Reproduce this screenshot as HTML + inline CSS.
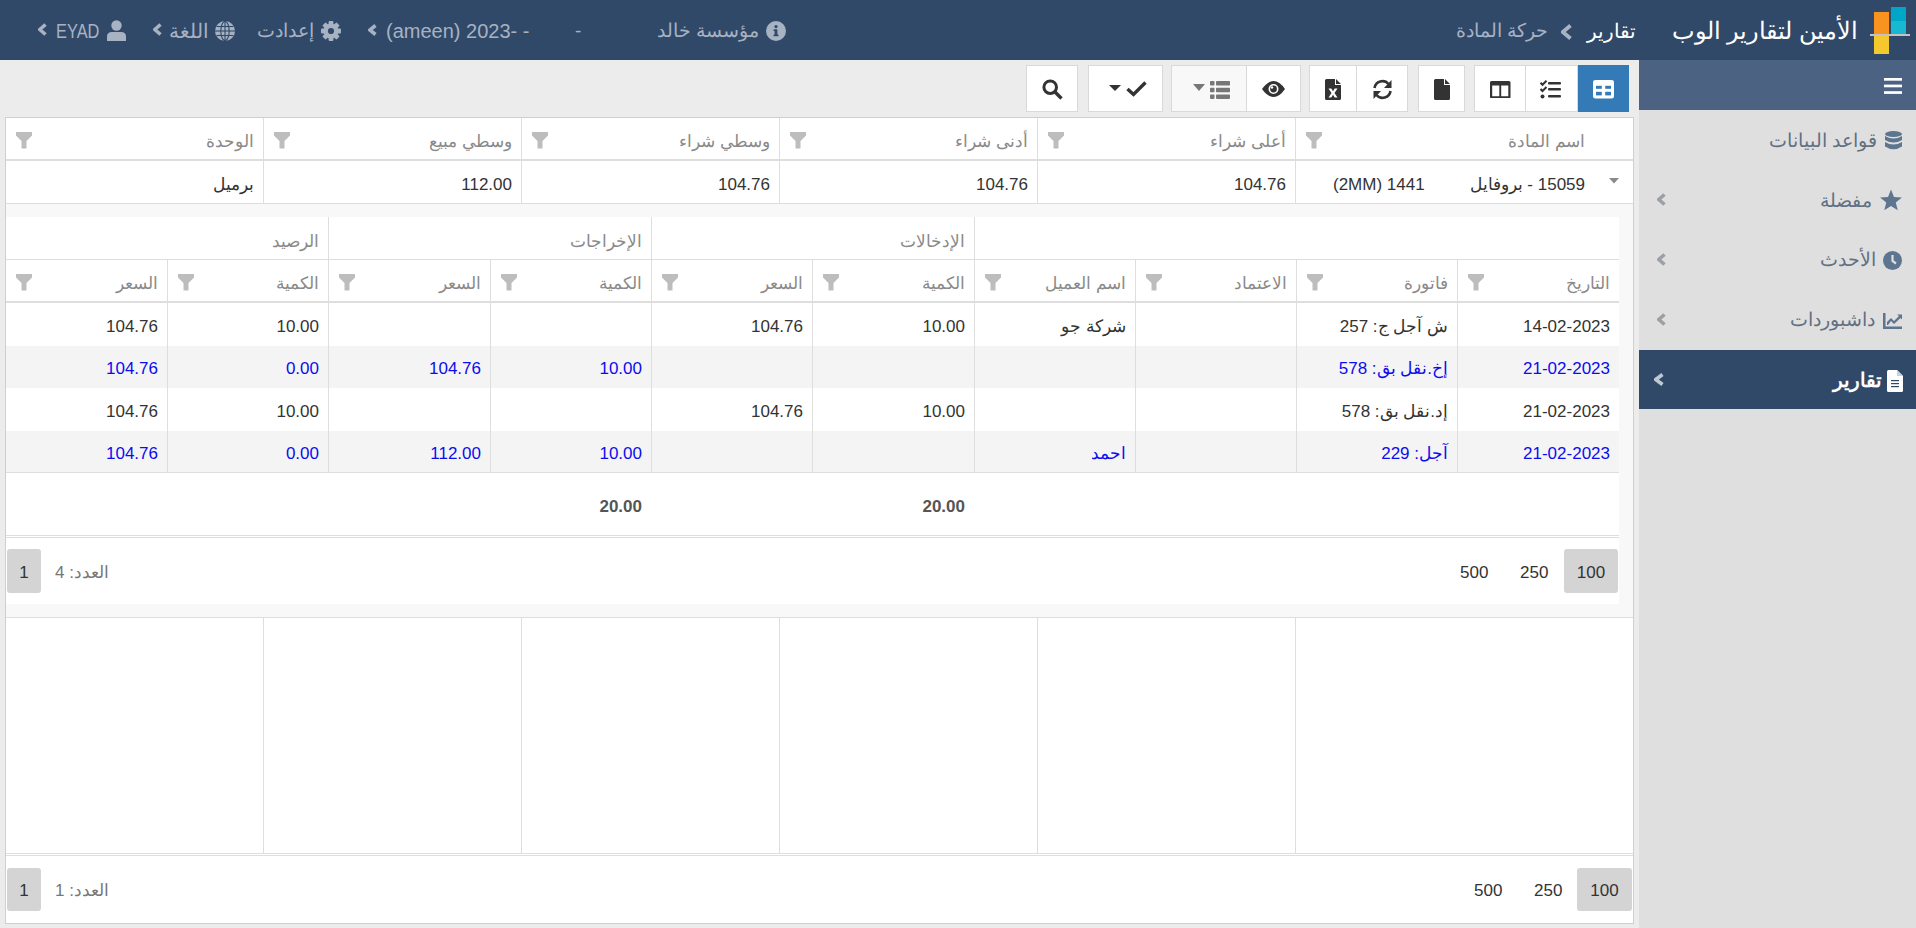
<!DOCTYPE html>
<html><head><meta charset="utf-8"><title>حركة المادة</title>
<style>
*{box-sizing:border-box;margin:0;padding:0}
html,body{width:1916px;height:928px;overflow:hidden}
body{position:relative;background:#ececec;font-family:"Liberation Sans",sans-serif;color:#333}
.a{position:absolute}
.t{white-space:nowrap}
</style></head><body>
<div class="a" style="left:0px;top:0px;width:1916px;height:60px;background:#314968"></div>
<div class="a" style="left:1874px;top:12px;width:15px;height:22px;background:#f7931e"></div>
<div class="a" style="left:1891px;top:7px;width:15px;height:14px;background:#00a6c6"></div>
<div class="a" style="left:1891px;top:21px;width:15px;height:13px;background:#17b8d0"></div>
<div class="a" style="left:1870px;top:34px;width:40px;height:2px;background:#c3c3c3"></div>
<div class="a" style="left:1874px;top:36px;width:15px;height:18px;background:#f5c92e"></div>
<div class="a t" dir="rtl" style="right:58px;top:16.0px;line-height:30px;font-size:24px;color:#fff;font-weight:normal;">الأمين لتقارير الوب</div>
<div class="a t" dir="rtl" style="right:280px;top:17.0px;line-height:28px;font-size:20px;color:#fff;font-weight:normal;">تقارير</div>
<svg class="a" style="left:1561px;top:23.5px;" width="11" height="16" viewBox="0 0 11 16"><path d="M9.5 1.5 L1.8 8.0 L9.5 14.5" fill="none" stroke="#a7b2c3" stroke-width="3.8" stroke-linecap="butt" stroke-linejoin="miter"/></svg>
<div class="a t" dir="rtl" style="right:368px;top:17.0px;line-height:28px;font-size:19px;color:#a7b2c3;font-weight:normal;">حركة المادة</div>
<svg class="a" style="left:38px;top:23px;" width="9" height="13" viewBox="0 0 9 13"><path d="M7.5 1.5 L1.8 6.5 L7.5 11.5" fill="none" stroke="#a7b2c3" stroke-width="3.6" stroke-linecap="butt" stroke-linejoin="miter"/></svg>
<div class="a t" dir="ltr" style="left:56px;top:18.0px;line-height:26px;font-size:19.5px;color:#a7b2c3;font-weight:normal;transform:scaleX(0.84);transform-origin:0 50%">EYAD</div>
<svg class="a" style="left:107px;top:20px;" width="19" height="21" viewBox="0 0 19 21"><circle cx="9.5" cy="5.5" r="5.2" fill="#a7b2c3"/><path d="M0 21 V16.5 Q0 12 5 12 H14 Q19 12 19 16.5 V21 Z" fill="#a7b2c3"/></svg>
<svg class="a" style="left:153px;top:23px;" width="9" height="13" viewBox="0 0 9 13"><path d="M7.5 1.5 L1.8 6.5 L7.5 11.5" fill="none" stroke="#a7b2c3" stroke-width="3.6" stroke-linecap="butt" stroke-linejoin="miter"/></svg>
<div class="a t" dir="rtl" style="right:1707px;top:17.0px;line-height:28px;font-size:20px;color:#a7b2c3;font-weight:normal;">اللغة</div>
<svg class="a" style="left:215px;top:21px;" width="20" height="20" viewBox="0 0 20 20"><circle cx="10" cy="10" r="10" fill="#a7b2c3"/><g fill="none" stroke="#314968" stroke-width="1.1"><ellipse cx="10" cy="10" rx="4.2" ry="9.6"/><line x1="10" y1="0" x2="10" y2="20"/><line x1="0" y1="10" x2="20" y2="10"/><line x1="1.5" y1="5.5" x2="18.5" y2="5.5"/><line x1="1.5" y1="14.5" x2="18.5" y2="14.5"/></g></svg>
<div class="a t" dir="rtl" style="right:1602px;top:17.0px;line-height:28px;font-size:19px;color:#a7b2c3;font-weight:normal;">إعدادت</div>
<svg class="a" style="left:321px;top:21px;" width="20" height="20" viewBox="0 0 20 20"><g fill="#a7b2c3"><circle cx="10" cy="10" r="7.4"/><rect x="7.6" y="0" width="4.8" height="5" rx="1" transform="rotate(0 10 10)"/><rect x="7.6" y="0" width="4.8" height="5" rx="1" transform="rotate(45 10 10)"/><rect x="7.6" y="0" width="4.8" height="5" rx="1" transform="rotate(90 10 10)"/><rect x="7.6" y="0" width="4.8" height="5" rx="1" transform="rotate(135 10 10)"/><rect x="7.6" y="0" width="4.8" height="5" rx="1" transform="rotate(180 10 10)"/><rect x="7.6" y="0" width="4.8" height="5" rx="1" transform="rotate(225 10 10)"/><rect x="7.6" y="0" width="4.8" height="5" rx="1" transform="rotate(270 10 10)"/><rect x="7.6" y="0" width="4.8" height="5" rx="1" transform="rotate(315 10 10)"/></g><circle cx="10" cy="10" r="3.1" fill="#314968"/></svg>
<svg class="a" style="left:368px;top:24px;" width="9" height="12" viewBox="0 0 9 12"><path d="M7.5 1.5 L1.8 6.0 L7.5 10.5" fill="none" stroke="#a7b2c3" stroke-width="3.6" stroke-linecap="butt" stroke-linejoin="miter"/></svg>
<div class="a t" dir="ltr" style="left:386px;top:18.0px;line-height:26px;font-size:20px;color:#a7b2c3;font-weight:normal;">(ameen) 2023- -</div>
<div class="a t" dir="ltr" style="left:575px;top:18.0px;line-height:26px;font-size:19px;color:#a7b2c3;font-weight:normal;">-</div>
<div class="a t" dir="rtl" style="right:1157px;top:17.0px;line-height:28px;font-size:19px;color:#a7b2c3;font-weight:normal;">مؤسسة خالد</div>
<svg class="a" style="left:766px;top:21px;" width="20" height="20" viewBox="0 0 20 20"><circle cx="10" cy="10" r="10" fill="#a7b2c3"/><rect x="8.6" y="8.5" width="2.8" height="6.5" fill="#314968"/><rect x="7.5" y="13.6" width="5" height="1.6" fill="#314968"/><rect x="7.5" y="8.5" width="3" height="1.5" fill="#314968"/><circle cx="10" cy="5.6" r="1.6" fill="#314968"/></svg>
<div class="a" style="left:1639px;top:60px;width:277px;height:868px;background:#dfdfdf"></div>
<div class="a" style="left:1639px;top:60px;width:277px;height:50px;background:#4b6282"></div>
<svg class="a" style="left:1884px;top:78px;" width="18" height="16" viewBox="0 0 18 16"><rect x="0" y="0" width="18" height="2.7" fill="#fff"/><rect x="0" y="6.6" width="18" height="2.7" fill="#fff"/><rect x="0" y="13.2" width="18" height="2.7" fill="#fff"/></svg>
<svg class="a" style="left:1885px;top:131px;" width="17" height="19" viewBox="0 0 17 19"><g fill="#5e7590"><ellipse cx="8.5" cy="3" rx="8.5" ry="3"/><path d="M0 5 Q8.5 10 17 5 V9 Q8.5 14 0 9Z"/><path d="M0 11 Q8.5 16 17 11 V15.5 Q8.5 21 0 15.5Z"/></g></svg>
<div class="a t" dir="rtl" style="right:39px;top:127.0px;line-height:28px;font-size:19px;color:#627082;font-weight:normal;">قواعد البيانات</div>
<svg class="a" style="left:1880px;top:189px;" width="22" height="22" viewBox="0 0 22 22"><polygon points="11.00,0.50 13.94,7.95 21.94,8.45 15.76,13.55 17.76,21.30 11.00,17.00 4.24,21.30 6.24,13.55 0.06,8.45 8.06,7.95" fill="#5e7590"/></svg>
<div class="a t" dir="rtl" style="right:44px;top:187.0px;line-height:28px;font-size:19px;color:#627082;font-weight:normal;">مفضلة</div>
<svg class="a" style="left:1657px;top:193px;" width="9" height="13" viewBox="0 0 9 13"><path d="M7.5 1.5 L1.8 6.5 L7.5 11.5" fill="none" stroke="#9c9fa4" stroke-width="3.6" stroke-linecap="butt" stroke-linejoin="miter"/></svg>
<svg class="a" style="left:1883px;top:251px;" width="19" height="19" viewBox="0 0 19 19"><circle cx="9.5" cy="9.5" r="9.5" fill="#5e7590"/><path d="M9.5 4 V10 L13 12.5" fill="none" stroke="#dfdfdf" stroke-width="2.2"/></svg>
<div class="a t" dir="rtl" style="right:40px;top:246.0px;line-height:28px;font-size:19px;color:#627082;font-weight:normal;">الأحدث</div>
<svg class="a" style="left:1657px;top:253px;" width="9" height="13" viewBox="0 0 9 13"><path d="M7.5 1.5 L1.8 6.5 L7.5 11.5" fill="none" stroke="#9c9fa4" stroke-width="3.6" stroke-linecap="butt" stroke-linejoin="miter"/></svg>
<svg class="a" style="left:1883px;top:313px;" width="19" height="16" viewBox="0 0 19 16"><path d="M0 0 H2.5 V13.5 H19 V16 H0Z" fill="#5e7590"/><path d="M4 12 L4 9 L8 5 L11 8 L16 3 L14 1.5 H19 V6.5 L17.5 5 L11 11 L8 8 L5 12Z" fill="#5e7590"/></svg>
<div class="a t" dir="rtl" style="right:41px;top:306.0px;line-height:28px;font-size:19px;color:#627082;font-weight:normal;">داشبوردات</div>
<svg class="a" style="left:1657px;top:313px;" width="9" height="13" viewBox="0 0 9 13"><path d="M7.5 1.5 L1.8 6.5 L7.5 11.5" fill="none" stroke="#9c9fa4" stroke-width="3.6" stroke-linecap="butt" stroke-linejoin="miter"/></svg>
<div class="a" style="left:1639px;top:350px;width:277px;height:59px;background:#314968"></div>
<svg class="a" style="left:1887px;top:370px;" width="16" height="22" viewBox="0 0 16 22"><path d="M0 1.5 Q0 0 1.5 0 H10 L16 6 V20.5 Q16 22 14.5 22 H1.5 Q0 22 0 20.5Z" fill="#fff"/><path d="M10 0 V6 H16" fill="#c9d1db"/><g fill="#2f4865"><rect x="4" y="10" width="8" height="1.2"/><rect x="4" y="13" width="8" height="1.2"/><rect x="4" y="16" width="8" height="1.2"/></g></svg>
<div class="a t" dir="rtl" style="right:34px;top:366.0px;line-height:28px;font-size:20px;color:#fff;font-weight:bold;">تقارير</div>
<svg class="a" style="left:1654px;top:373px;" width="10" height="13" viewBox="0 0 10 13"><path d="M8.5 1.5 L1.8 6.5 L8.5 11.5" fill="none" stroke="#c0c8d2" stroke-width="3.6" stroke-linecap="butt" stroke-linejoin="miter"/></svg>
<div class="a" style="left:1577px;top:65px;width:52px;height:47px;background:#337ab7;border:1px solid #337ab7"></div>
<div class="a" style="left:1525px;top:65px;width:53px;height:47px;background:#fff;border:1px solid #d9d9d9"></div>
<div class="a" style="left:1474px;top:65px;width:52px;height:47px;background:#fff;border:1px solid #d9d9d9"></div>
<div class="a" style="left:1418px;top:65px;width:47px;height:47px;background:#fff;border:1px solid #d9d9d9"></div>
<div class="a" style="left:1356px;top:65px;width:52px;height:47px;background:#fff;border:1px solid #d9d9d9"></div>
<div class="a" style="left:1309px;top:65px;width:48px;height:47px;background:#fff;border:1px solid #d9d9d9"></div>
<div class="a" style="left:1246px;top:65px;width:55px;height:47px;background:#fff;border:1px solid #d9d9d9"></div>
<div class="a" style="left:1171px;top:65px;width:76px;height:47px;background:#f8f8f8;border:1px solid #d9d9d9"></div>
<div class="a" style="left:1088px;top:65px;width:75px;height:47px;background:#fff;border:1px solid #d9d9d9"></div>
<div class="a" style="left:1026px;top:65px;width:52px;height:47px;background:#fff;border:1px solid #d9d9d9"></div>
<svg class="a" style="left:1592.5px;top:80.3px;" width="21" height="18.4" viewBox="0 0 21 18.4"><rect x="0" y="0" width="21" height="18.4" rx="2.5" fill="#fff"/><g fill="#337ab7"><rect x="3" y="5.8" width="5.8" height="3"/><rect x="12.2" y="5.8" width="5.8" height="3"/><rect x="3" y="11.8" width="5.8" height="3.6"/><rect x="12.2" y="11.8" width="5.8" height="3.6"/></g></svg>
<svg class="a" style="left:1540px;top:80px;" width="22" height="19" viewBox="0 0 22 19"><g fill="none" stroke="#333" stroke-width="2"><path d="M0.5 2.8 L2.5 4.8 L6.5 0.8"/><path d="M0.5 9 L2.5 11 L6.5 7"/></g><circle cx="2.5" cy="16.5" r="2" fill="#333"/><g fill="#333"><rect x="8" y="2" width="13" height="2.6" rx="1"/><rect x="8" y="8" width="13" height="2.6" rx="1"/><rect x="8" y="15" width="13" height="2.6" rx="1"/></g></svg>
<svg class="a" style="left:1490px;top:80.8px;" width="20.5" height="17.5" viewBox="0 0 20.5 17.5"><path d="M0 1.5 Q0 0 1.5 0 H19 Q20.5 0 20.5 1.5 V16 Q20.5 17.5 19 17.5 H1.5 Q0 17.5 0 16Z M2.2 4.6 V15.3 H9.3 V4.6Z M11.2 4.6 V15.3 H18.3 V4.6Z" fill="#333" fill-rule="evenodd"/></svg>
<svg class="a" style="left:1434px;top:79px;" width="16" height="21" viewBox="0 0 16 21"><path d="M0 1.5 Q0 0 1.5 0 H10 V6 H16 V19.5 Q16 21 14.5 21 H1.5 Q0 21 0 19.5Z M11 0 L16 5 H11Z" fill="#333"/></svg>
<svg class="a" style="left:1372px;top:79px;" width="21" height="21" viewBox="0 0 21 21"><g fill="none" stroke="#333" stroke-width="2.6"><path d="M2.5 9 A8 8 0 0 1 16.5 5"/><path d="M18.5 12 A8 8 0 0 1 4.5 16"/></g><path d="M19.5 1 V9 H12Z" fill="#333"/><path d="M1.5 20 V12 H9Z" fill="#333"/></svg>
<svg class="a" style="left:1325px;top:79px;" width="16" height="21" viewBox="0 0 16 21"><path d="M0 1.5 Q0 0 1.5 0 H10 V6 H16 V19.5 Q16 21 14.5 21 H1.5 Q0 21 0 19.5Z M11 0 L16 5 H11Z" fill="#333"/><path d="M3.5 9.5 H6.3 L8 12.3 L9.7 9.5 H12.5 L9.5 14 L12.5 18.5 H9.7 L8 15.7 L6.3 18.5 H3.5 L6.5 14Z" fill="#fff"/></svg>
<svg class="a" style="left:1262px;top:81px;" width="23" height="16" viewBox="0 0 23 16"><path d="M0 8 Q5.5 0 11.5 0 Q17.5 0 23 8 Q17.5 16 11.5 16 Q5.5 16 0 8Z" fill="#333"/><circle cx="11.5" cy="8" r="5" fill="#fff"/><circle cx="11.5" cy="8" r="3.4" fill="#333"/><circle cx="10" cy="6.5" r="1.2" fill="#fff"/></svg>
<svg class="a" style="left:1193px;top:84px;" width="12" height="7" viewBox="0 0 12 7"><path d="M0 0 H12 L6 7Z" fill="#777"/></svg>
<svg class="a" style="left:1210px;top:81px;" width="20" height="18" viewBox="0 0 20 18"><g fill="#777"><rect x="0" y="0" width="4.5" height="4.5" rx="0.8"/><rect x="0" y="6.7" width="4.5" height="4.5" rx="0.8"/><rect x="0" y="13.4" width="4.5" height="4.5" rx="0.8"/><rect x="6" y="0" width="14" height="4.5" rx="0.8"/><rect x="6" y="6.7" width="14" height="4.5" rx="0.8"/><rect x="6" y="13.4" width="14" height="4.5" rx="0.8"/></g></svg>
<svg class="a" style="left:1109px;top:85px;" width="12" height="6" viewBox="0 0 12 6"><path d="M0 0 H12 L6 6Z" fill="#333"/></svg>
<svg class="a" style="left:1126px;top:81px;" width="21" height="16" viewBox="0 0 21 16"><path d="M1.5 8 L7.5 13.5 L19.5 1.5" fill="none" stroke="#333" stroke-width="3.4"/></svg>
<svg class="a" style="left:1042px;top:79px;" width="21" height="21" viewBox="0 0 21 21"><circle cx="8.2" cy="8.2" r="6.3" fill="none" stroke="#333" stroke-width="3"/><path d="M12.8 12.8 L19.5 19.5" stroke="#333" stroke-width="3.4"/></svg>
<div class="a" style="left:5px;top:117px;width:1629px;height:807px;background:#fff;border:1px solid #cfcfcf"></div>
<div class="a" style="left:6px;top:159px;width:1627px;height:2px;background:#dedede"></div>
<div class="a" style="left:6px;top:203px;width:1627px;height:1px;background:#dedede"></div>
<div class="a" style="left:263px;top:118px;width:1px;height:85px;background:#dedede"></div>
<div class="a" style="left:521px;top:118px;width:1px;height:85px;background:#dedede"></div>
<div class="a" style="left:779px;top:118px;width:1px;height:85px;background:#dedede"></div>
<div class="a" style="left:1037px;top:118px;width:1px;height:85px;background:#dedede"></div>
<div class="a" style="left:1295px;top:118px;width:1px;height:85px;background:#dedede"></div>
<div class="a t" dir="rtl" style="right:1662px;top:129.5px;line-height:24px;font-size:17px;color:#8a8a8a;font-weight:normal;">الوحدة</div>
<svg class="a" style="left:16px;top:132px;" width="16" height="16.5" viewBox="0 0 16 16.5"><path d="M0 0 H16 V3.5 L10.5 9 V16.5 H5.5 V9 L0 3.5Z" fill="#bdbdbd"/></svg>
<div class="a t" dir="rtl" style="right:1404px;top:129.5px;line-height:24px;font-size:17px;color:#8a8a8a;font-weight:normal;">وسطي مبيع</div>
<svg class="a" style="left:274px;top:132px;" width="16" height="16.5" viewBox="0 0 16 16.5"><path d="M0 0 H16 V3.5 L10.5 9 V16.5 H5.5 V9 L0 3.5Z" fill="#bdbdbd"/></svg>
<div class="a t" dir="rtl" style="right:1146px;top:129.5px;line-height:24px;font-size:17px;color:#8a8a8a;font-weight:normal;">وسطي شراء</div>
<svg class="a" style="left:532px;top:132px;" width="16" height="16.5" viewBox="0 0 16 16.5"><path d="M0 0 H16 V3.5 L10.5 9 V16.5 H5.5 V9 L0 3.5Z" fill="#bdbdbd"/></svg>
<div class="a t" dir="rtl" style="right:888px;top:129.5px;line-height:24px;font-size:17px;color:#8a8a8a;font-weight:normal;">أدنى شراء</div>
<svg class="a" style="left:790px;top:132px;" width="16" height="16.5" viewBox="0 0 16 16.5"><path d="M0 0 H16 V3.5 L10.5 9 V16.5 H5.5 V9 L0 3.5Z" fill="#bdbdbd"/></svg>
<div class="a t" dir="rtl" style="right:630px;top:129.5px;line-height:24px;font-size:17px;color:#8a8a8a;font-weight:normal;">أعلى شراء</div>
<svg class="a" style="left:1048px;top:132px;" width="16" height="16.5" viewBox="0 0 16 16.5"><path d="M0 0 H16 V3.5 L10.5 9 V16.5 H5.5 V9 L0 3.5Z" fill="#bdbdbd"/></svg>
<div class="a t" dir="rtl" style="right:331px;top:129.5px;line-height:24px;font-size:17px;color:#8a8a8a;font-weight:normal;">اسم المادة</div>
<svg class="a" style="left:1306px;top:132px;" width="16" height="16.5" viewBox="0 0 16 16.5"><path d="M0 0 H16 V3.5 L10.5 9 V16.5 H5.5 V9 L0 3.5Z" fill="#bdbdbd"/></svg>
<div class="a t" dir="rtl" style="right:1662px;top:172.5px;line-height:24px;font-size:17px;color:#333;font-weight:normal;">برميل</div>
<div class="a t" dir="rtl" style="right:1404px;top:172.5px;line-height:24px;font-size:17px;color:#333;font-weight:normal;">112.00</div>
<div class="a t" dir="rtl" style="right:1146px;top:172.5px;line-height:24px;font-size:17px;color:#333;font-weight:normal;">104.76</div>
<div class="a t" dir="rtl" style="right:888px;top:172.5px;line-height:24px;font-size:17px;color:#333;font-weight:normal;">104.76</div>
<div class="a t" dir="rtl" style="right:630px;top:172.5px;line-height:24px;font-size:17px;color:#333;font-weight:normal;">104.76</div>
<div class="a t" dir="rtl" style="right:331px;top:172.5px;line-height:24px;font-size:17px;color:#333;font-weight:normal;">15059 - بروفايل</div>
<div class="a t" dir="ltr" style="left:1333px;top:172.5px;line-height:24px;font-size:17px;color:#333;font-weight:normal;">(2MM) 1441</div>
<svg class="a" style="left:1609px;top:177.5px;" width="10" height="6" viewBox="0 0 10 6"><path d="M0 0 H10 L5 5.5Z" fill="#8a8a8a"/></svg>
<div class="a" style="left:6px;top:204px;width:1627px;height:413px;background:#f8f8f8"></div>
<div class="a" style="left:6px;top:217px;width:1613px;height:387px;background:#fff"></div>
<div class="a" style="left:6px;top:259px;width:1613px;height:1px;background:#dedede"></div>
<div class="a" style="left:328px;top:217px;width:1px;height:43px;background:#dedede"></div>
<div class="a" style="left:651px;top:217px;width:1px;height:43px;background:#dedede"></div>
<div class="a" style="left:974px;top:217px;width:1px;height:43px;background:#dedede"></div>
<div class="a t" dir="rtl" style="right:951px;top:229.5px;line-height:24px;font-size:17px;color:#8a8a8a;font-weight:normal;">الإدخالات</div>
<div class="a t" dir="rtl" style="right:1274px;top:229.5px;line-height:24px;font-size:17px;color:#8a8a8a;font-weight:normal;">الإخراجات</div>
<div class="a t" dir="rtl" style="right:1597px;top:229.5px;line-height:24px;font-size:17px;color:#8a8a8a;font-weight:normal;">الرصيد</div>
<div class="a" style="left:6px;top:301px;width:1613px;height:2px;background:#dedede"></div>
<div class="a" style="left:167px;top:260px;width:1px;height:213px;background:#dedede"></div>
<div class="a" style="left:328px;top:260px;width:1px;height:213px;background:#dedede"></div>
<div class="a" style="left:490px;top:260px;width:1px;height:213px;background:#dedede"></div>
<div class="a" style="left:651px;top:260px;width:1px;height:213px;background:#dedede"></div>
<div class="a" style="left:812px;top:260px;width:1px;height:213px;background:#dedede"></div>
<div class="a" style="left:974px;top:260px;width:1px;height:213px;background:#dedede"></div>
<div class="a" style="left:1135px;top:260px;width:1px;height:213px;background:#dedede"></div>
<div class="a" style="left:1296px;top:260px;width:1px;height:213px;background:#dedede"></div>
<div class="a" style="left:1457px;top:260px;width:1px;height:213px;background:#dedede"></div>
<div class="a t" dir="rtl" style="right:1758px;top:271.5px;line-height:24px;font-size:17px;color:#8a8a8a;font-weight:normal;">السعر</div>
<svg class="a" style="left:16px;top:274px;" width="16" height="16.5" viewBox="0 0 16 16.5"><path d="M0 0 H16 V3.5 L10.5 9 V16.5 H5.5 V9 L0 3.5Z" fill="#bdbdbd"/></svg>
<div class="a t" dir="rtl" style="right:1597px;top:271.5px;line-height:24px;font-size:17px;color:#8a8a8a;font-weight:normal;">الكمية</div>
<svg class="a" style="left:178px;top:274px;" width="16" height="16.5" viewBox="0 0 16 16.5"><path d="M0 0 H16 V3.5 L10.5 9 V16.5 H5.5 V9 L0 3.5Z" fill="#bdbdbd"/></svg>
<div class="a t" dir="rtl" style="right:1435px;top:271.5px;line-height:24px;font-size:17px;color:#8a8a8a;font-weight:normal;">السعر</div>
<svg class="a" style="left:339px;top:274px;" width="16" height="16.5" viewBox="0 0 16 16.5"><path d="M0 0 H16 V3.5 L10.5 9 V16.5 H5.5 V9 L0 3.5Z" fill="#bdbdbd"/></svg>
<div class="a t" dir="rtl" style="right:1274px;top:271.5px;line-height:24px;font-size:17px;color:#8a8a8a;font-weight:normal;">الكمية</div>
<svg class="a" style="left:501px;top:274px;" width="16" height="16.5" viewBox="0 0 16 16.5"><path d="M0 0 H16 V3.5 L10.5 9 V16.5 H5.5 V9 L0 3.5Z" fill="#bdbdbd"/></svg>
<div class="a t" dir="rtl" style="right:1113px;top:271.5px;line-height:24px;font-size:17px;color:#8a8a8a;font-weight:normal;">السعر</div>
<svg class="a" style="left:662px;top:274px;" width="16" height="16.5" viewBox="0 0 16 16.5"><path d="M0 0 H16 V3.5 L10.5 9 V16.5 H5.5 V9 L0 3.5Z" fill="#bdbdbd"/></svg>
<div class="a t" dir="rtl" style="right:951px;top:271.5px;line-height:24px;font-size:17px;color:#8a8a8a;font-weight:normal;">الكمية</div>
<svg class="a" style="left:823px;top:274px;" width="16" height="16.5" viewBox="0 0 16 16.5"><path d="M0 0 H16 V3.5 L10.5 9 V16.5 H5.5 V9 L0 3.5Z" fill="#bdbdbd"/></svg>
<div class="a t" dir="rtl" style="right:790px;top:271.5px;line-height:24px;font-size:17px;color:#8a8a8a;font-weight:normal;">اسم العميل</div>
<svg class="a" style="left:985px;top:274px;" width="16" height="16.5" viewBox="0 0 16 16.5"><path d="M0 0 H16 V3.5 L10.5 9 V16.5 H5.5 V9 L0 3.5Z" fill="#bdbdbd"/></svg>
<div class="a t" dir="rtl" style="right:629px;top:271.5px;line-height:24px;font-size:17px;color:#8a8a8a;font-weight:normal;">الاعتماد</div>
<svg class="a" style="left:1146px;top:274px;" width="16" height="16.5" viewBox="0 0 16 16.5"><path d="M0 0 H16 V3.5 L10.5 9 V16.5 H5.5 V9 L0 3.5Z" fill="#bdbdbd"/></svg>
<div class="a t" dir="rtl" style="right:468px;top:271.5px;line-height:24px;font-size:17px;color:#8a8a8a;font-weight:normal;">فاتورة</div>
<svg class="a" style="left:1307px;top:274px;" width="16" height="16.5" viewBox="0 0 16 16.5"><path d="M0 0 H16 V3.5 L10.5 9 V16.5 H5.5 V9 L0 3.5Z" fill="#bdbdbd"/></svg>
<div class="a t" dir="rtl" style="right:306px;top:271.5px;line-height:24px;font-size:17px;color:#8a8a8a;font-weight:normal;">التاريخ</div>
<svg class="a" style="left:1468px;top:274px;" width="16" height="16.5" viewBox="0 0 16 16.5"><path d="M0 0 H16 V3.5 L10.5 9 V16.5 H5.5 V9 L0 3.5Z" fill="#bdbdbd"/></svg>
<div class="a t" dir="rtl" style="right:1758px;top:314.5px;line-height:24px;font-size:17px;color:#333;font-weight:normal;">104.76</div>
<div class="a t" dir="rtl" style="right:1597px;top:314.5px;line-height:24px;font-size:17px;color:#333;font-weight:normal;">10.00</div>
<div class="a t" dir="rtl" style="right:1113px;top:314.5px;line-height:24px;font-size:17px;color:#333;font-weight:normal;">104.76</div>
<div class="a t" dir="rtl" style="right:951px;top:314.5px;line-height:24px;font-size:17px;color:#333;font-weight:normal;">10.00</div>
<div class="a t" dir="rtl" style="right:790px;top:314.5px;line-height:24px;font-size:17px;color:#333;font-weight:normal;">شركة جو</div>
<div class="a t" dir="rtl" style="right:468px;top:314.5px;line-height:24px;font-size:17px;color:#333;font-weight:normal;">ش آجل ج: 257</div>
<div class="a t" dir="rtl" style="right:306px;top:314.5px;line-height:24px;font-size:17px;color:#333;font-weight:normal;">14-02-2023</div>
<div class="a" style="left:6px;top:346px;width:161px;height:42px;background:#f4f4f4"></div>
<div class="a" style="left:168px;top:346px;width:160px;height:42px;background:#f4f4f4"></div>
<div class="a" style="left:329px;top:346px;width:161px;height:42px;background:#f4f4f4"></div>
<div class="a" style="left:491px;top:346px;width:160px;height:42px;background:#f4f4f4"></div>
<div class="a" style="left:652px;top:346px;width:160px;height:42px;background:#f4f4f4"></div>
<div class="a" style="left:813px;top:346px;width:161px;height:42px;background:#f4f4f4"></div>
<div class="a" style="left:975px;top:346px;width:160px;height:42px;background:#f4f4f4"></div>
<div class="a" style="left:1136px;top:346px;width:160px;height:42px;background:#f4f4f4"></div>
<div class="a" style="left:1297px;top:346px;width:160px;height:42px;background:#f4f4f4"></div>
<div class="a" style="left:1458px;top:346px;width:161px;height:42px;background:#f4f4f4"></div>
<div class="a t" dir="rtl" style="right:1758px;top:357.0px;line-height:24px;font-size:17px;color:#0c0cf0;font-weight:normal;">104.76</div>
<div class="a t" dir="rtl" style="right:1597px;top:357.0px;line-height:24px;font-size:17px;color:#0c0cf0;font-weight:normal;">0.00</div>
<div class="a t" dir="rtl" style="right:1435px;top:357.0px;line-height:24px;font-size:17px;color:#0c0cf0;font-weight:normal;">104.76</div>
<div class="a t" dir="rtl" style="right:1274px;top:357.0px;line-height:24px;font-size:17px;color:#0c0cf0;font-weight:normal;">10.00</div>
<div class="a t" dir="rtl" style="right:468px;top:357.0px;line-height:24px;font-size:17px;color:#0c0cf0;font-weight:normal;">إخ.نقل بق: 578</div>
<div class="a t" dir="rtl" style="right:306px;top:357.0px;line-height:24px;font-size:17px;color:#0c0cf0;font-weight:normal;">21-02-2023</div>
<div class="a t" dir="rtl" style="right:1758px;top:399.5px;line-height:24px;font-size:17px;color:#333;font-weight:normal;">104.76</div>
<div class="a t" dir="rtl" style="right:1597px;top:399.5px;line-height:24px;font-size:17px;color:#333;font-weight:normal;">10.00</div>
<div class="a t" dir="rtl" style="right:1113px;top:399.5px;line-height:24px;font-size:17px;color:#333;font-weight:normal;">104.76</div>
<div class="a t" dir="rtl" style="right:951px;top:399.5px;line-height:24px;font-size:17px;color:#333;font-weight:normal;">10.00</div>
<div class="a t" dir="rtl" style="right:468px;top:399.5px;line-height:24px;font-size:17px;color:#333;font-weight:normal;">إد.نقل بق: 578</div>
<div class="a t" dir="rtl" style="right:306px;top:399.5px;line-height:24px;font-size:17px;color:#333;font-weight:normal;">21-02-2023</div>
<div class="a" style="left:6px;top:431px;width:161px;height:42px;background:#f4f4f4"></div>
<div class="a" style="left:168px;top:431px;width:160px;height:42px;background:#f4f4f4"></div>
<div class="a" style="left:329px;top:431px;width:161px;height:42px;background:#f4f4f4"></div>
<div class="a" style="left:491px;top:431px;width:160px;height:42px;background:#f4f4f4"></div>
<div class="a" style="left:652px;top:431px;width:160px;height:42px;background:#f4f4f4"></div>
<div class="a" style="left:813px;top:431px;width:161px;height:42px;background:#f4f4f4"></div>
<div class="a" style="left:975px;top:431px;width:160px;height:42px;background:#f4f4f4"></div>
<div class="a" style="left:1136px;top:431px;width:160px;height:42px;background:#f4f4f4"></div>
<div class="a" style="left:1297px;top:431px;width:160px;height:42px;background:#f4f4f4"></div>
<div class="a" style="left:1458px;top:431px;width:161px;height:42px;background:#f4f4f4"></div>
<div class="a t" dir="rtl" style="right:1758px;top:442.0px;line-height:24px;font-size:17px;color:#0c0cf0;font-weight:normal;">104.76</div>
<div class="a t" dir="rtl" style="right:1597px;top:442.0px;line-height:24px;font-size:17px;color:#0c0cf0;font-weight:normal;">0.00</div>
<div class="a t" dir="rtl" style="right:1435px;top:442.0px;line-height:24px;font-size:17px;color:#0c0cf0;font-weight:normal;">112.00</div>
<div class="a t" dir="rtl" style="right:1274px;top:442.0px;line-height:24px;font-size:17px;color:#0c0cf0;font-weight:normal;">10.00</div>
<div class="a t" dir="rtl" style="right:790px;top:442.0px;line-height:24px;font-size:17px;color:#0c0cf0;font-weight:normal;">احمد</div>
<div class="a t" dir="rtl" style="right:468px;top:442.0px;line-height:24px;font-size:17px;color:#0c0cf0;font-weight:normal;">آجل: 229</div>
<div class="a t" dir="rtl" style="right:306px;top:442.0px;line-height:24px;font-size:17px;color:#0c0cf0;font-weight:normal;">21-02-2023</div>
<div class="a" style="left:6px;top:472px;width:1613px;height:1px;background:#dedede"></div>
<div class="a t" dir="rtl" style="right:1274px;top:494.5px;line-height:24px;font-size:17px;color:#555;font-weight:bold;">20.00</div>
<div class="a t" dir="rtl" style="right:951px;top:494.5px;line-height:24px;font-size:17px;color:#555;font-weight:bold;">20.00</div>
<div class="a" style="left:6px;top:535px;width:1613px;height:1px;background:#dedede"></div>
<div class="a" style="left:6px;top:537px;width:1613px;height:1px;background:#dedede"></div>
<div class="a" style="left:7px;top:549px;width:34px;height:44px;background:#d4d4d4;border-radius:3px"></div>
<div class="a t" dir="ltr" style="left:7px;top:560.5px;line-height:24px;font-size:17px;color:#333;font-weight:normal;width:34px;text-align:center">1</div>
<div class="a t" dir="rtl" style="right:1807px;top:560.5px;line-height:24px;font-size:17px;color:#777;font-weight:normal;">العدد: 4</div>
<div class="a" style="left:1564px;top:549px;width:54px;height:44px;background:#d4d4d4;border-radius:3px"></div>
<div class="a t" dir="ltr" style="left:1564px;top:560.5px;line-height:24px;font-size:17px;color:#333;font-weight:normal;width:54px;text-align:center">100</div>
<div class="a t" dir="ltr" style="left:1460px;top:560.5px;line-height:24px;font-size:17px;color:#333;font-weight:normal;">500</div>
<div class="a t" dir="ltr" style="left:1520px;top:560.5px;line-height:24px;font-size:17px;color:#333;font-weight:normal;">250</div>
<div class="a" style="left:6px;top:617px;width:1627px;height:1px;background:#dedede"></div>
<div class="a" style="left:263px;top:618px;width:1px;height:235px;background:#dedede"></div>
<div class="a" style="left:521px;top:618px;width:1px;height:235px;background:#dedede"></div>
<div class="a" style="left:779px;top:618px;width:1px;height:235px;background:#dedede"></div>
<div class="a" style="left:1037px;top:618px;width:1px;height:235px;background:#dedede"></div>
<div class="a" style="left:1295px;top:618px;width:1px;height:235px;background:#dedede"></div>
<div class="a" style="left:6px;top:853px;width:1627px;height:1px;background:#dedede"></div>
<div class="a" style="left:6px;top:855px;width:1627px;height:1px;background:#dedede"></div>
<div class="a" style="left:7px;top:868px;width:34px;height:43px;background:#d4d4d4;border-radius:3px"></div>
<div class="a t" dir="ltr" style="left:7px;top:878.5px;line-height:24px;font-size:17px;color:#333;font-weight:normal;width:34px;text-align:center">1</div>
<div class="a t" dir="rtl" style="right:1807px;top:878.5px;line-height:24px;font-size:17px;color:#777;font-weight:normal;">العدد: 1</div>
<div class="a" style="left:1577px;top:868px;width:55px;height:43px;background:#d4d4d4;border-radius:3px"></div>
<div class="a t" dir="ltr" style="left:1577px;top:878.5px;line-height:24px;font-size:17px;color:#333;font-weight:normal;width:55px;text-align:center">100</div>
<div class="a t" dir="ltr" style="left:1474px;top:878.5px;line-height:24px;font-size:17px;color:#333;font-weight:normal;">500</div>
<div class="a t" dir="ltr" style="left:1534px;top:878.5px;line-height:24px;font-size:17px;color:#333;font-weight:normal;">250</div>
</body></html>
